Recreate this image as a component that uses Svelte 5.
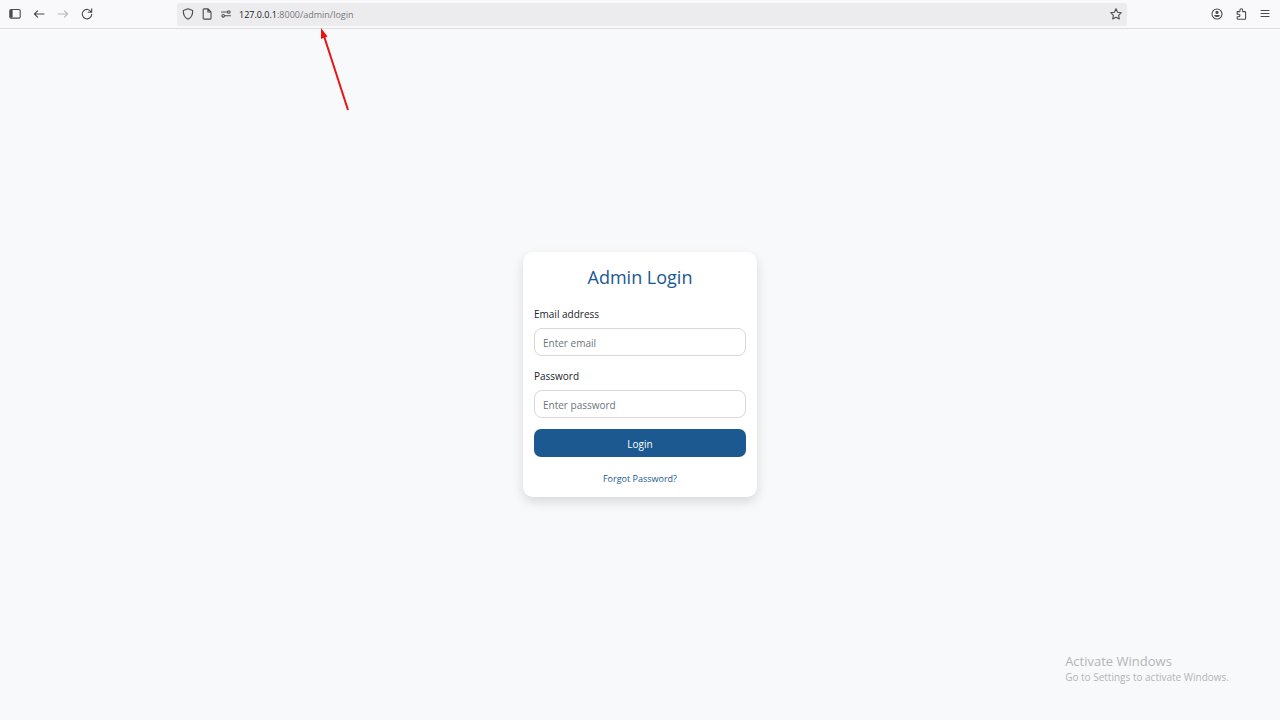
<script>
  let email = "";
  let password = "";
  let url = { host: "127.0.0.1", path: ":8000/admin/login" };

  function handleLogin() {
    password = "";
  }
</script>

<div class="browser">
  <header class="toolbar">
    <nav class="nav-buttons" aria-label="Navigation">
      <button class="icon-btn" aria-label="Sidebar">
        <svg width="12" height="12" viewBox="0 0 12 12">
          <rect x="0.8" y="1.5" width="10.4" height="8.6" rx="1.3" />
          <path d="M1 2h2.6v7.6H1z" class="solid" />
        </svg>
      </button>
      <button class="icon-btn" aria-label="Back">
        <svg width="12" height="12" viewBox="0 0 12 12">
          <path d="M11 6H1.4M4.6 2.8L1.4 6L4.6 9.2" />
        </svg>
      </button>
      <button class="icon-btn" aria-label="Forward" disabled>
        <svg width="12" height="12" viewBox="0 0 12 12">
          <path d="M1 6h9.6M7.4 2.8L10.6 6L7.4 9.2" />
        </svg>
      </button>
      <button class="icon-btn" aria-label="Reload">
        <svg width="12" height="12" viewBox="0 0 12 12">
          <path d="M10.2 4A4.7 4.7 0 1 0 10.7 6.3M10.7 0.8v3.5H7.2" />
        </svg>
      </button>
    </nav>

    <div class="address-bar">
      <button class="icon-btn" aria-label="Tracking protection">
        <svg width="12" height="12" viewBox="0 0 12 12">
          <path d="M6 0.8L10.7 2.5C10.8 6.5 9.2 9.8 6 11.3C2.8 9.8 1.2 6.5 1.3 2.5Z" />
        </svg>
      </button>
      <button class="icon-btn" aria-label="Site information">
        <svg width="12" height="12" viewBox="0 0 12 12">
          <path d="M2.2 1.8a.9.9 0 0 1 .9-.9h4L10 3.8v6.4a.9.9 0 0 1-.9.9h-6a.9.9 0 0 1-.9-.9zM6.9 1v3h3" />
        </svg>
      </button>
      <button class="icon-btn" aria-label="Permissions">
        <svg width="12" height="12" viewBox="0 0 12 12">
          <path d="M1.5 4h5M5.2 7.8h5.3" />
          <circle cx="8.8" cy="4" r="1.3" />
          <circle cx="3.2" cy="7.8" r="1.3" />
        </svg>
      </button>
      <span class="url"><b>{url.host}</b>{url.path}</span>
      <button class="icon-btn" aria-label="Bookmark this page">
        <svg width="12" height="12" viewBox="0 0 12 12">
          <path d="M6 0.8L7.6 4.2L11.3 4.7L8.6 7.3L9.3 11L6 9.2L2.7 11L3.4 7.3L0.7 4.7L4.4 4.2Z" />
        </svg>
      </button>
    </div>

    <div class="tools">
      <button class="icon-btn" aria-label="Account">
        <svg width="12" height="12" viewBox="0 0 12 12">
          <circle cx="6" cy="6" r="5" />
          <circle cx="6" cy="4.4" r="1.6" class="solid" />
          <path d="M3.1 7h5.8C8.6 8.4 7.4 9.1 6 9.1S3.4 8.4 3.1 7z" class="solid" />
        </svg>
      </button>
      <button class="icon-btn" aria-label="Extensions">
        <svg width="12" height="12" viewBox="0 0 12 12">
          <path d="M2.2 3.6h2.7V2.2a1.4 1.4 0 0 1 2.8 0v1.4h2.1a.8.8 0 0 1 .8.8v6a.8.8 0 0 1-.8.8H3a.8.8 0 0 1-.8-.8V8.8h1.4a1.3 1.3 0 0 0 0-2.6H2.2z" />
        </svg>
      </button>
      <button class="icon-btn" aria-label="Menu">
        <svg width="12" height="12" viewBox="0 0 12 12">
          <path d="M2 2.5h8M2 5.5h8M2 8.5h8" />
        </svg>
      </button>
    </div>
  </header>

  <main class="page">
    <form class="card" on:submit|preventDefault={handleLogin}>
      <h1>Admin Login</h1>
      <label for="email">Email address</label>
      <input id="email" type="email" placeholder="Enter email" bind:value={email} />
      <label for="password">Password</label>
      <input
        id="password"
        type="password"
        placeholder="Enter password"
        bind:value={password}
      />
      <button class="login-btn" type="submit">Login</button>
      <a href="/admin/forgot-password">Forgot Password?</a>
    </form>
  </main>

  <!-- Arrow pointing at the address -->
  <svg class="arrow" width="32" height="84" viewBox="0 0 32 84" aria-hidden="true">
    <path d="M5 8L29 82" class="shaft" />
    <path d="M2 0L8.5 8.5L2 11Z" class="head" />
  </svg>

  <aside class="watermark">
    <p class="watermark-title">Activate Windows</p>
    <p class="watermark-text">Go to Settings to activate Windows.</p>
  </aside>
</div>

<style>
  :global(body) {
    margin: 0;
    background-color: #f8f9fb;
  }

  .browser {
    position: relative;
    display: flex;
    flex-direction: column;
    min-height: 100vh;
    font-family: "Open Sans", "Noto Sans", sans-serif;
    color: #212529;
  }

  .toolbar {
    display: flex;
    align-items: center;
    box-sizing: border-box;
    height: 29px;
    padding: 0 9px;
    background-color: #f9f9fb;
    border-bottom: 1px solid #dcdce0;
  }

  .nav-buttons,
  .tools {
    display: flex;
    flex: 6;
    gap: 12px;
  }

  .nav-buttons {
    flex: 7;
  }

  .tools {
    justify-content: flex-end;
  }

  .icon-btn {
    display: flex;
    padding: 0;
    border: none;
    background: none;
    color: #4a4a50;
    cursor: pointer;
  }

  .icon-btn:disabled {
    color: #b8b8bd;
    cursor: default;
  }

  .icon-btn svg {
    fill: none;
    stroke: currentColor;
    stroke-width: 1.1;
    stroke-linejoin: round;
    stroke-linecap: round;
  }

  .icon-btn .solid {
    fill: currentColor;
    stroke: none;
  }

  .address-bar {
    display: flex;
    align-items: center;
    gap: 7px;
    box-sizing: border-box;
    width: 76%;
    max-width: 950px;
    height: 23px;
    padding: 0 5px;
    border-radius: 3px;
    background-color: #ececef;
  }

  .url {
    flex: 1;
    font-size: 9px;
    color: #77777c;
  }

  .url b {
    font-weight: normal;
    color: #15141a;
  }

  .page {
    display: flex;
    flex: 1;
    align-items: center;
    justify-content: center;
  }

  .card {
    display: flex;
    flex-direction: column;
    box-sizing: border-box;
    width: 234px;
    padding: 11px;
    border-radius: 10px;
    background-color: #fff;
    box-shadow: 0 5px 12px rgba(0, 0, 0, 0.13);
  }

  h1 {
    margin: 0 0 16px;
    font-size: 18px;
    font-weight: normal;
    line-height: 28px;
    text-align: center;
    color: #1a5890;
  }

  label {
    margin-bottom: 6px;
    font-size: 10px;
    line-height: 15px;
  }

  input {
    box-sizing: border-box;
    height: 28px;
    margin-bottom: 13px;
    padding: 1px 8px 0;
    border: 1px solid #d5d9dd;
    border-radius: 8px;
    background-color: #fff;
    font-family: inherit;
    font-size: 10px;
    color: #212529;
  }

  input::placeholder {
    color: #6c757d;
    opacity: 1;
  }

  #password {
    margin-bottom: 11px;
  }

  .login-btn {
    height: 28px;
    margin-bottom: 14px;
    padding: 1px 0 0;
    border: none;
    border-radius: 7px;
    background-color: #1b5990;
    font-family: inherit;
    font-size: 10px;
    color: #fff;
    cursor: pointer;
  }

  .card a {
    align-self: center;
    font-size: 9px;
    line-height: 15px;
    color: #1a5890;
    text-decoration: none;
  }

  .arrow {
    position: absolute;
    top: 28px;
    left: 319px;
    pointer-events: none;
  }

  .shaft {
    fill: none;
    stroke: #ee1111;
    stroke-width: 2;
  }

  .head {
    fill: #ee1111;
  }

  .watermark {
    position: absolute;
    right: 51px;
    bottom: 36px;
    color: #b3b5b8;
    pointer-events: none;
  }

  .watermark p {
    margin: 0;
  }

  .watermark-title {
    font-size: 13px;
    line-height: 18px;
  }

  .watermark-text {
    font-size: 10px;
    line-height: 14px;
  }
</style>
